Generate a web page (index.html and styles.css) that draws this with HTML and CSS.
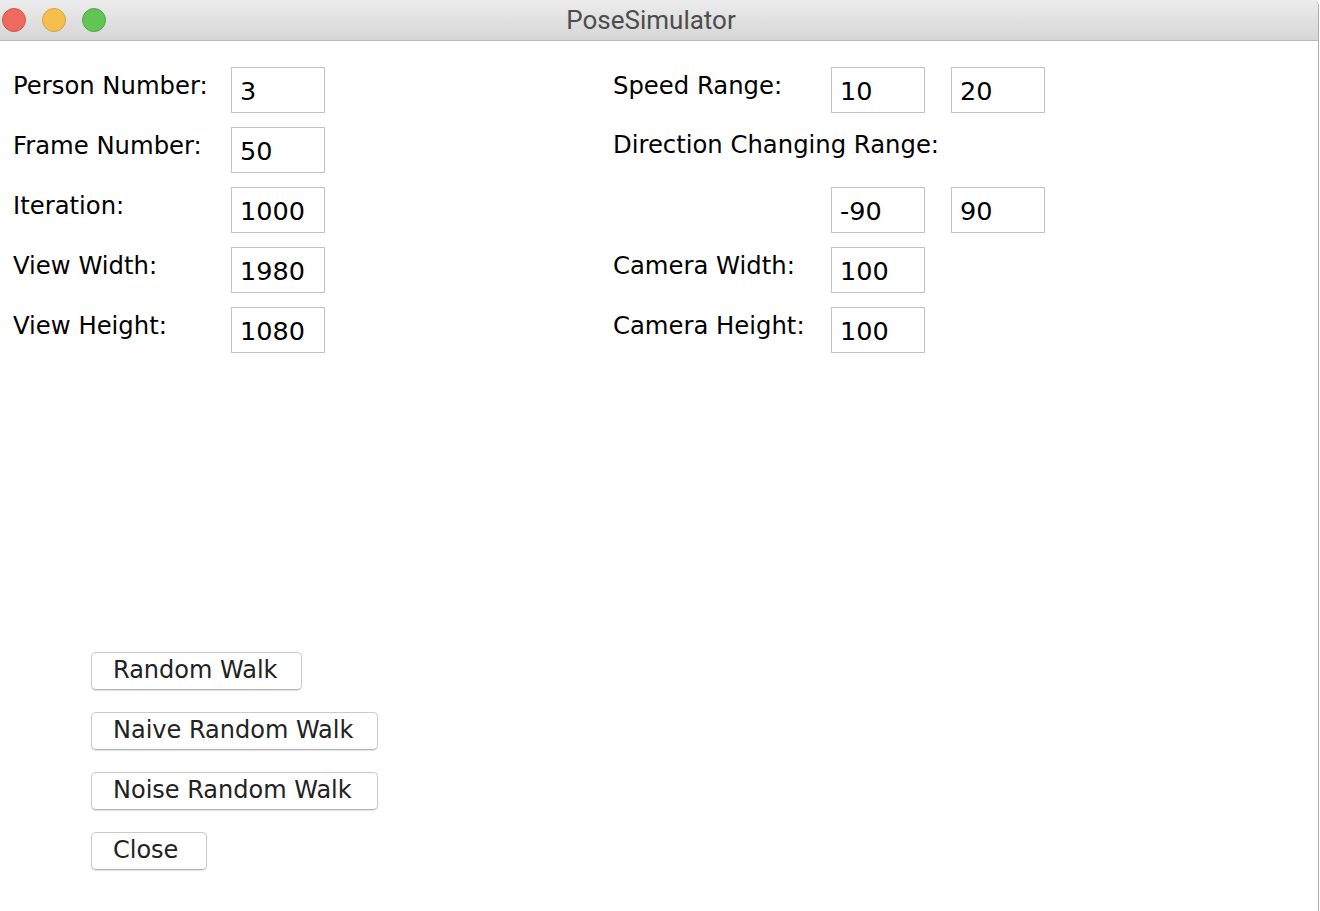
FILE: index.html
```html
<!DOCTYPE html>
<html>
<head>
<meta charset="utf-8">
<title>PoseSimulator</title>
<link rel="stylesheet" href="styles.css">
</head>
<body>
<div class="window">
  <div class="titlebar">
    <div class="lights">
      <span class="light red"></span>
      <span class="light yellow"></span>
      <span class="light green"></span>
    </div>
    <div class="title">PoseSimulator</div>
  </div>
  <div class="content">
    <div class="form">
      <div class="col">
        <div class="row"><span class="label">Person Number:</span><span class="field">3</span></div>
        <div class="row"><span class="label">Frame Number:</span><span class="field">50</span></div>
        <div class="row"><span class="label">Iteration:</span><span class="field">1000</span></div>
        <div class="row"><span class="label">View Width:</span><span class="field">1980</span></div>
        <div class="row"><span class="label">View Height:</span><span class="field">1080</span></div>
      </div>
      <div class="col">
        <div class="row"><span class="label">Speed Range:</span><span class="field">10</span><span class="field">20</span></div>
        <div class="row"><span class="label wide">Direction Changing Range:</span></div>
        <div class="row"><span class="label"></span><span class="field">-90</span><span class="field">90</span></div>
        <div class="row"><span class="label">Camera Width:</span><span class="field">100</span></div>
        <div class="row"><span class="label">Camera Height:</span><span class="field">100</span></div>
      </div>
    </div>
    <div class="buttons">
      <button class="btn">Random Walk</button>
      <button class="btn">Naive Random Walk</button>
      <button class="btn noise">Noise Random Walk</button>
      <button class="btn close">Close</button>
    </div>
  </div>
</div>
</body>
</html>
```

FILE: styles.css
```css
html, body {
  margin: 0;
  padding: 0;
  background: #ffffff;
}

body {
  width: 1320px;
  height: 911px;
  overflow: hidden;
}

.window {
  width: 1318px;
  height: 911px;
  border-right: 1px solid #ababab;
  border-radius: 0 6px 0 0;
  overflow: hidden;
  background: #ffffff;
  display: flex;
  flex-direction: column;
}

.titlebar {
  height: 40px;
  flex: 0 0 40px;
  border-bottom: 1px solid #b9b9b9;
  background: linear-gradient(#ececec, #d6d6d6);
  display: flex;
  align-items: center;
  position: relative;
  border-radius: 0 6px 0 0;
}

.lights {
  position: absolute;
  left: 2px;
  top: 8px;
  display: flex;
  gap: 16px;
}

.light {
  width: 22px;
  height: 22px;
  border-radius: 50%;
  display: block;
}

.red { background: #ee6a5f; border: 1px solid #d5534a; }
.yellow { background: #f6be4f; border: 1px solid #d9a23c; }
.green { background: #61c455; border: 1px solid #4ea943; }

.title {
  flex: 1;
  text-align: center;
  padding-right: 16px;
  font-family: Roboto, "Liberation Sans", sans-serif;
  font-size: 26px;
  line-height: 40px;
  color: #4d4d4d;
}

.content {
  padding: 26px 0 0 13px;
  font-family: "DejaVu Sans", sans-serif;
  font-size: 24px;
  color: #000;
}

.form {
  display: flex;
}

.col {
  width: 600px;
  display: flex;
  flex-direction: column;
  gap: 14px;
}

.row {
  display: flex;
  height: 46px;
  gap: 26px;
}

.label {
  width: 218px;
  flex: 0 0 218px;
  margin-right: -26px;
  line-height: 28px;
  padding-top: 5px;
  font-size: 24.3px;
  white-space: nowrap;
}

.label.wide {
  flex: 0 0 auto;
  width: auto;
  padding-top: 4px;
}

.field {
  box-sizing: border-box;
  width: 94px;
  height: 46px;
  border: 1px solid #c3c3c3;
  padding: 9px 7px 7px 8px;
  font-size: 25.5px;
  line-height: 28px;
  color: #000;
  background: #fff;
}

.buttons {
  margin-top: 299px;
  padding-left: 78px;
  display: flex;
  flex-direction: column;
  align-items: flex-start;
  gap: 22px;
}

.btn {
  box-sizing: border-box;
  height: 38px;
  padding: 3px 24px 5px 21px;
  font-family: "DejaVu Sans", sans-serif;
  font-size: 24px;
  line-height: 28px;
  color: #222;
  background: #ffffff;
  border: 1px solid #cbcbcb;
  border-bottom-color: #b4b4b4;
  border-radius: 5px;
  box-shadow: 0 1px 1px rgba(0, 0, 0, 0.12);
  text-align: left;
}

.btn.noise {
  padding-right: 25px;
}

.btn.close {
  width: 116px;
}
```
